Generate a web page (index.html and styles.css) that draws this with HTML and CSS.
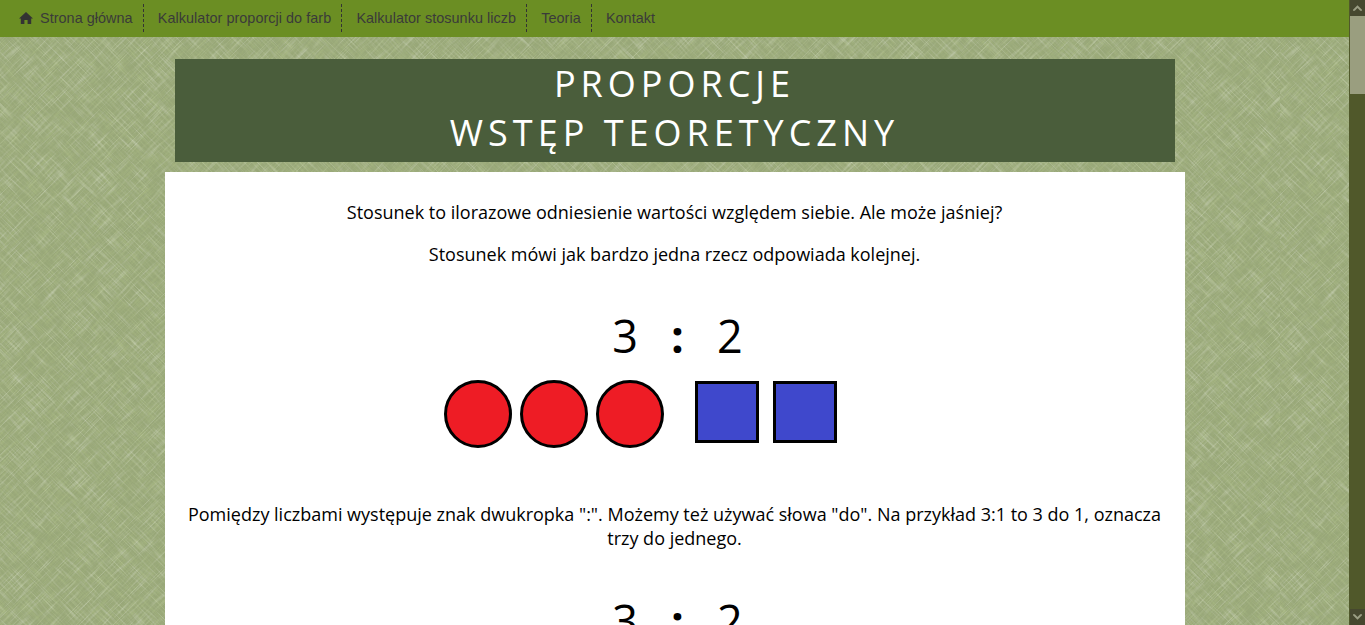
FILE: index.html
```html
<!doctype html>
<html lang="pl">
    <head>
        <title>Proporcje - wstęp teoretyczny</title>
        <meta charset="utf-8">
        <link rel="stylesheet" href="styles.css">
    </head>
    <body>
        <div id="window">
            <div id="page">
                <ul id="menu">
                    <li>
                        <a href="#">
                            <svg class="home" viewBox="0 0 14 12"><path d="M7 0 L14 6.4 L12.2 6.4 L12.2 12 L8.6 12 L8.6 8 L5.4 8 L5.4 12 L1.8 12 L1.8 6.4 L0 6.4 Z"/></svg>
                            Strona główna
                        </a>
                    </li>
                    <li><a href="#">Kalkulator proporcji do farb</a></li>
                    <li><a href="#">Kalkulator stosunku liczb</a></li>
                    <li><a href="#">Teoria</a></li>
                    <li><a href="#">Kontakt</a></li>
                </ul>
                <h1 id="title">PROPORCJE<br>WSTĘP TEORETYCZNY</h1>
                <div id="content">
                    <p>Stosunek to ilorazowe odniesienie wartości względem siebie. Ale może jaśniej?</p>
                    <p>Stosunek mówi jak bardzo jedna rzecz odpowiada kolejnej.</p>
                    <div class="ratio">3 <span class="colon">:</span> 2</div>
                    <div class="shapes">
                        <span class="circle"></span>
                        <span class="circle"></span>
                        <span class="circle"></span>
                        <span class="square first"></span>
                        <span class="square"></span>
                    </div>
                    <p>Pomiędzy liczbami występuje znak dwukropka ":". Możemy też używać słowa "do". Na przykład 3:1 to 3 do 1, oznacza trzy do jednego.</p>
                    <div class="ratio second">3 <span class="colon">:</span> 2</div>
                </div>
            </div>
            <div id="scrollbar">
                <div class="arrow"><svg viewBox="0 0 10 6"><path d="M0 5 L5 0 L10 5 L10 6 L8 6 L5 3 L2 6 L0 6 Z"/></svg></div>
                <div class="thumb"></div>
                <div class="track"></div>
                <div class="arrow"><svg viewBox="0 0 10 6"><path d="M0 1 L5 6 L10 1 L10 0 L8 0 L5 3 L2 0 L0 0 Z"/></svg></div>
            </div>
        </div>
    </body>
</html>
```

FILE: styles.css
```css
html, body {
    margin: 0;
    height: 100%;
    overflow: hidden;
}
#window {
    display: flex;
    height: 625px;
}
#page {
    flex: 1;
    overflow: hidden;
    background-color: #98a778;
    background-image: url("data:image/svg+xml,%3Csvg xmlns='http://www.w3.org/2000/svg' width='1280' height='800'%3E%3Cfilter id='l' x='0' y='0' width='100%25' height='100%25'%3E%3CfeTurbulence type='fractalNoise' baseFrequency='0.035 0.8' numOctaves='2' seed='4'/%3E%3CfeColorMatrix values='0 0 0 0 1 0 0 0 0 1 0 0 0 0 1 2.6 0 0 0 -1.3'/%3E%3C/filter%3E%3Cfilter id='d' x='0' y='0' width='100%25' height='100%25'%3E%3CfeTurbulence type='fractalNoise' baseFrequency='0.04 0.9' numOctaves='2' seed='9'/%3E%3CfeColorMatrix values='0 0 0 0 .45 0 0 0 0 .55 0 0 0 0 .25 2.4 0 0 0 -1.1'/%3E%3C/filter%3E%3Cg transform='rotate(45 640 400)'%3E%3Crect x='-400' y='-600' width='2100' height='2000' filter='url(%23d)' opacity='.4'/%3E%3Crect x='-400' y='-600' width='2100' height='2000' filter='url(%23l)' opacity='.26'/%3E%3C/g%3E%3Cg transform='rotate(-45 640 400)'%3E%3Crect x='-400' y='-600' width='2100' height='2000' filter='url(%23d)' opacity='.4'/%3E%3Crect x='-400' y='-600' width='2100' height='2000' filter='url(%23l)' opacity='.26'/%3E%3C/g%3E%3C/svg%3E");
    font-family: "Open Sans", sans-serif;
}
#menu {
    display: flex;
    height: 37px;
    margin: 0;
    padding: 0 0 0 8px;
    list-style: none;
    background-color: #6b8e23;
    font-family: "Liberation Sans", Arial, sans-serif;
    font-size: 14.4px;
    letter-spacing: 0.05px;
}
#menu li {
    display: flex;
    align-items: center;
    margin: 4px 0 5px;
    border-left: 1px dashed #333333;
}
#menu li:first-child {
    border-left: none;
}
#menu a {
    display: flex;
    align-items: center;
    padding: 0 10.2px 0 14px;
    color: #3a3a3a;
    text-decoration: none;
}
#menu li:first-child a {
    padding-left: 11px;
}
.home {
    width: 14px;
    height: 12px;
    margin-right: 7px;
    fill: #333333;
}
#title {
    width: 1000px;
    margin: 22px auto 10px;
    padding: 0 0 5px;
    background-color: #4a5d3b;
    color: #ffffff;
    font-size: 36px;
    font-weight: 400;
    line-height: 49px;
    letter-spacing: 5px;
    text-align: center;
}
#content {
    box-sizing: border-box;
    width: 1020px;
    height: 460px;
    margin: 0 auto;
    padding: 28px 20px 0;
    background-color: #ffffff;
    color: #000000;
    font-size: 18px;
    line-height: 24px;
    text-align: center;
}
#content p {
    margin: 0 0 18px;
}
.ratio {
    margin-top: 40px;
    padding-left: 6px;
    font-size: 45px;
    line-height: 60px;
    word-spacing: 21.5px;
}
.ratio .colon {
    font-weight: 700;
}
.ratio.second {
    margin-top: 41px;
}
.shapes {
    display: flex;
    align-items: center;
    justify-content: center;
    gap: 8px;
    margin: 14px 0 54px;
    padding-right: 69px;
}
.circle {
    box-sizing: border-box;
    width: 68px;
    height: 68px;
    border: 3px solid #000000;
    border-radius: 50%;
    background-color: #ee1c25;
}
.square {
    box-sizing: border-box;
    width: 64px;
    height: 62px;
    margin-left: 6px;
    margin-bottom: 4px;
    border: 3px solid #000000;
    background-color: #3f48cc;
}
.square.first {
    margin-left: 23px;
}
#scrollbar {
    display: flex;
    flex-direction: column;
    box-sizing: border-box;
    width: 16px;
    padding-left: 1px;
    background-color: #50582a;
}
.arrow {
    display: flex;
    align-items: center;
    justify-content: center;
    height: 16px;
    background-color: #46482f;
}
.arrow svg {
    width: 9px;
    height: 6px;
    fill: #9b9e84;
}
.thumb {
    height: 78px;
    background-color: #9a9e7f;
}
.track {
    flex: 1;
}
```
